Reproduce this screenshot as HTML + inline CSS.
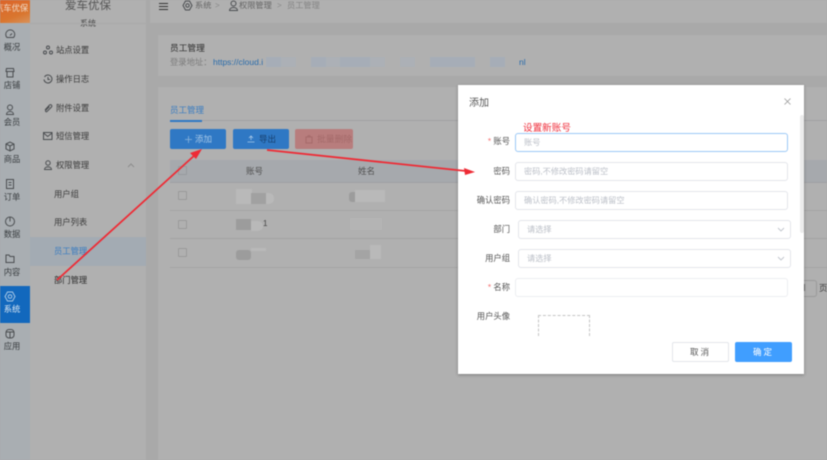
<!DOCTYPE html>
<html lang="zh"><head><meta charset="utf-8"><title>员工管理</title>
<style>
html,body{margin:0;padding:0;width:827px;height:460px;overflow:hidden;background:#a9a9a9}
#p{position:relative;width:827px;height:460px;overflow:hidden;background:#a9a9a9;font-family:"Liberation Sans","Noto Sans CJK SC",sans-serif;filter:blur(.4px)}
.a{position:absolute}
.t{position:absolute;white-space:nowrap;line-height:12px}
.r{text-align:center;width:30px;left:-3px;font-size:8.300px;color:#3a3e41}
.m{font-size:8.300px;color:#3c3c3c}
.ic{position:absolute;fill:none;stroke:#4a4d50;stroke-width:1}
.l{font-size:8.300px;color:#555;text-align:right;right:317px}
.in{position:absolute;box-sizing:border-box;background:#fff;border:1px solid #e3e5ea;border-radius:3px;height:19px;width:273px;left:515px;font-size:8.200px;color:#bcc0c8;padding:0 8px;line-height:17px;white-space:nowrap}
.b{position:absolute;background:#a6adb7}
.w{position:absolute;background:#b9b9b9}
.g{position:absolute;background:#9c9c9c}
</style></head><body><div id="p">
<!-- rail -->
<div class="a" style="left:0;top:0;width:30px;height:460px;background:#a9aeb2"></div>
<div class="a" style="left:0;top:0;width:30px;height:23px;background:linear-gradient(160deg,#dc642a,#d9762f 65%,#d8935c);overflow:hidden">
<div class="t" style="left:-5px;top:2px;font-size:8.300px;color:#f0d9c6">汽车优保</div></div>
<div class="a" style="left:0;top:286px;width:30px;height:37px;background:#1268bd"></div>
<div class="t r" style="top:41px">概况</div>
<div class="t r" style="top:79px">店铺</div>
<div class="t r" style="top:116px">会员</div>
<div class="t r" style="top:153px">商品</div>
<div class="t r" style="top:191px">订单</div>
<div class="t r" style="top:228px">数据</div>
<div class="t r" style="top:266px">内容</div>
<div class="t r" style="top:303px;color:#dfe9f3">系统</div>
<div class="t r" style="top:340px">应用</div>
<svg class="ic" style="left:0;top:28px" width="20" height="12" viewBox="0 0 20 12"><path d="M7 9.500a4.500 4.500 0 1 1 6.500 0z"/><path d="M10 7.500l2-2"/></svg>
<svg class="ic" style="left:0;top:67px" width="20" height="11" viewBox="0 0 20 11"><path d="M6.500 1.500h7l.5 3h-8zM7 5v5h6V5"/></svg>
<svg class="ic" style="left:0;top:104px" width="20" height="11" viewBox="0 0 20 11"><circle cx="10" cy="3.500" r="2.500"/><path d="M6.500 10.500c0-4 7-4 7 0z"/></svg>
<svg class="ic" style="left:0;top:141px" width="20" height="11" viewBox="0 0 20 11"><path d="M6 3l4-2 4 2v5l-4 2-4-2zM6 3l4 2 4-2M10 5v5"/></svg>
<svg class="ic" style="left:0;top:178px" width="20" height="11" viewBox="0 0 20 11"><path d="M6.500 1.500h7v9h-7zM8.500 4.500h3M8.500 7h3"/></svg>
<svg class="ic" style="left:0;top:216px" width="20" height="11" viewBox="0 0 20 11"><circle cx="10" cy="5.500" r="4.500"/><path d="M10 1v4.500"/></svg>
<svg class="ic" style="left:0;top:253px" width="20" height="11" viewBox="0 0 20 11"><path d="M6 2h3l1 1.500h4V9.500H6z"/></svg>
<svg class="ic" style="left:0;top:291px;stroke:#a9c8e6" width="20" height="11" viewBox="0 0 20 11"><path d="M7.500 1h5l2.500 4.500-2.500 4.500h-5L5 5.500z"/><circle cx="10" cy="5.500" r="1.800"/></svg>
<svg class="ic" style="left:0;top:328px" width="20" height="11" viewBox="0 0 20 11"><rect x="6" y="1.500" width="8" height="8.500" rx="3"/><path d="M6 4h8M10 4v6"/></svg>
<!-- second sidebar -->
<div class="a" style="left:30px;top:0;width:116px;height:460px;background:#b0b0b0"></div>
<div class="t" style="left:30px;width:116px;text-align:center;top:0;font-size:11.500px;line-height:12px;color:#555">爱车优保</div>
<div class="t" style="left:30px;width:116px;text-align:center;top:18px;font-size:8px;color:#3f3f3f">系统</div>
<div class="a" style="left:30px;top:23px;width:116px;height:1px;background:#a9a9a9"></div>
<div class="t m" style="left:56px;top:44px">站点设置</div>
<div class="t m" style="left:56px;top:73px">操作日志</div>
<div class="t m" style="left:56px;top:102px">附件设置</div>
<div class="t m" style="left:56px;top:130px">短信管理</div>
<div class="t m" style="left:56px;top:159px">权限管理</div>
<svg class="ic" style="left:43px;top:45px" width="10" height="10" viewBox="0 0 10 10"><circle cx="5" cy="2.500" r="1.500"/><circle cx="2" cy="7.500" r="1.500"/><circle cx="8" cy="7.500" r="1.500"/></svg>
<svg class="ic" style="left:43px;top:74px" width="10" height="10" viewBox="0 0 10 10"><path d="M1.500 3A4 4 0 1 1 1 5.500M5 3v2.500h2"/></svg>
<svg class="ic" style="left:43px;top:103px" width="10" height="10" viewBox="0 0 10 10"><path d="M2 7l4.500-5c1.500-1 3 .5 2 2L4 8.500c-1 .8-2-.2-1.300-1.200L6.500 3.500"/></svg>
<svg class="ic" style="left:43px;top:131px" width="10" height="10" viewBox="0 0 10 10"><rect x=".5" y="1.500" width="8.500" height="7"/><path d="M.5 2l4.200 3.500L9 2"/></svg>
<svg class="ic" style="left:43px;top:160px" width="10" height="10" viewBox="0 0 10 10"><circle cx="5" cy="3" r="2.200"/><path d="M1.500 9.500c0-3.500 7-3.500 7 0z"/></svg>
<svg class="ic" style="left:127px;top:163px;stroke:#8d8d8d" width="8" height="5" viewBox="0 0 8 5"><path d="M1 4l3-3 3 3"/></svg>
<div class="a" style="left:30px;top:237px;width:116px;height:29px;background:#a3abb3"></div>
<div class="t m" style="left:54px;top:188px">用户组</div>
<div class="t m" style="left:54px;top:216px">用户列表</div>
<div class="t m" style="left:54px;top:245px;color:#3a7cc0">员工管理</div>
<div class="t m" style="left:54px;top:274px;color:#2c2c2c">部门管理</div>
<!-- top bar -->
<div class="a" style="left:150px;top:0;width:677px;height:23px;background:#b0b0b0"></div>
<svg class="a" style="left:159px;top:1px" width="10" height="10" viewBox="0 0 10 10" fill="none" stroke="#333" stroke-width="1"><path d="M0 2.500h9M0 5.500h9M0 8.500h9"/></svg>
<svg class="ic" style="left:182px;top:0" width="11" height="11" viewBox="0 0 11 11"><path d="M3.500 1h4L10 5.500 7.500 10h-4L1 5.500z"/><circle cx="5.500" cy="5.500" r="1.700"/></svg>
<div class="t" style="left:195px;top:0;font-size:8.200px;color:#666">系统</div>
<div class="t" style="left:215px;top:0;font-size:8px;color:#888">&gt;</div>
<svg class="ic" style="left:228px;top:0" width="11" height="11" viewBox="0 0 11 11"><circle cx="5.500" cy="3.500" r="2.500"/><path d="M1.500 10.500c0-4 8-4 8 0z"/></svg>
<div class="t" style="left:239px;top:0;font-size:8.200px;color:#666">权限管理</div>
<div class="t" style="left:277px;top:0;font-size:8px;color:#888">&gt;</div>
<div class="t" style="left:287px;top:0;font-size:8.200px;color:#858585">员工管理</div>
<!-- card 1 -->
<div class="a" style="left:158px;top:35px;width:669px;height:41px;background:#b0b0b0"></div>
<div class="t" style="left:170px;top:42px;font-size:8.700px;color:#2e2e2e">员工管理</div>
<div class="t" style="left:170px;top:56px;font-size:8.300px;color:#7d7d7d">登录地址：</div>
<div class="t" style="left:213px;top:56px;font-size:8.500px;color:#2a6cab">https://cloud.i</div>
<div class="b" style="left:266px;top:57px;width:15px;height:10px"></div>
<div class="b" style="left:281px;top:57px;width:15px;height:10px;background:#acb0b6"></div>
<div class="b" style="left:311px;top:57px;width:15px;height:10px"></div>
<div class="b" style="left:326px;top:57px;width:14px;height:10px;background:#acb0b6"></div>
<div class="b" style="left:340px;top:57px;width:30px;height:10px"></div>
<div class="b" style="left:370px;top:57px;width:15px;height:10px;background:#acb0b6"></div>
<div class="b" style="left:400px;top:57px;width:15px;height:10px;background:#acb0b6"></div>
<div class="b" style="left:430px;top:57px;width:45px;height:10px"></div>
<div class="b" style="left:490px;top:57px;width:15px;height:10px"></div>
<div class="t" style="left:519px;top:56px;font-size:8.500px;color:#2a6cab">nl</div>
<!-- card 2 -->
<div class="a" style="left:158px;top:87px;width:669px;height:373px;background:#b0b0b0"></div>
<div class="t" style="left:170px;top:104px;font-size:8.500px;color:#3a7cc0">员工管理</div>
<div class="a" style="left:170px;top:120px;width:657px;height:1px;background:#a0a0a3"></div>
<div class="a" style="left:170px;top:120px;width:32px;height:2px;background:#2f78c4"></div>
<div class="a" style="left:170px;top:129px;width:56px;height:20px;border-radius:2px;background:#2f78c4"></div>
<svg class="a" style="left:185px;top:136px" width="7" height="7" viewBox="0 0 7 7" fill="none" stroke="#8db5dd" stroke-width=".8"><path d="M3.500 0v7M0 3.500h7"/></svg>
<div class="t" style="left:195px;top:133px;font-size:8.500px;color:#a9c9e8">添加</div>
<div class="a" style="left:233px;top:129px;width:56px;height:20px;border-radius:2px;background:#2f78c4"></div>
<svg class="a" style="left:247px;top:135px" width="8" height="8" viewBox="0 0 8 8" fill="none" stroke="#a9c9e8" stroke-width=".8"><path d="M4 1v4M2 3l2-2 2 2M.5 7h7"/></svg>
<div class="t" style="left:259px;top:133px;font-size:8.500px;color:#17406e">导出</div>
<div class="a" style="left:295px;top:129px;width:58px;height:20px;border-radius:2px;background:#b87d7d"></div>
<svg class="a" style="left:305px;top:135px" width="8" height="9" viewBox="0 0 8 9" fill="none" stroke="#a56b6b"><path d="M1 2h6v6H1zM3 2V.7h2V2"/></svg>
<div class="t" style="left:317px;top:133px;font-size:8.800px;color:#a46a6a">批量删除</div>
<!-- table -->
<div class="a" style="left:170px;top:160px;width:657px;height:22px;background:#a6a9ad"></div>
<div class="a" style="left:170px;top:210px;width:657px;height:1px;background:#a4a4a4"></div>
<div class="a" style="left:170px;top:238px;width:657px;height:1px;background:#a2a2a2"></div>
<div class="a" style="left:170px;top:267px;width:657px;height:1px;background:#a4a4a4"></div>
<div class="a" style="left:170px;top:182px;width:657px;height:1px;background:#a0a0a3"></div>
<div class="t" style="left:246px;top:165px;font-size:8.500px;color:#505050">账号</div>
<div class="t" style="left:358px;top:165px;font-size:8.500px;color:#505050">姓名</div>
<div class="a" style="left:178px;top:166px;width:7px;height:7px;border:1px solid #979a9e;border-radius:1px"></div>
<div class="a" style="left:178px;top:191px;width:7px;height:7px;border:1px solid #9a9a9a;border-radius:1px"></div>
<div class="a" style="left:178px;top:220px;width:7px;height:7px;border:1px solid #9a9a9a;border-radius:1px"></div>
<div class="a" style="left:178px;top:248px;width:7px;height:7px;border:1px solid #9a9a9a;border-radius:1px"></div>
<div class="w" style="left:236px;top:189px;width:16px;height:15px"></div>
<div class="g" style="left:251px;top:193px;width:15px;height:11px;background:#a1a1a1"></div>
<div class="w" style="left:266px;top:193px;width:8px;height:11px;border-radius:0 5px 5px 0"></div>
<div class="g" style="left:236px;top:219px;width:15px;height:11px"></div>
<div class="w" style="left:251px;top:221px;width:12px;height:10px;border-radius:0 5px 5px 0"></div>
<div class="t" style="left:263px;top:218px;font-size:8px;color:#444">1</div>
<div class="g" style="left:236px;top:250px;width:15px;height:10px;border-radius:3px"></div>
<div class="w" style="left:251px;top:248px;width:15px;height:3px"></div>
<div class="g" style="left:349px;top:192px;width:6px;height:10px;border-radius:3px 0 0 3px"></div>
<div class="w" style="left:355px;top:190px;width:30px;height:12px"></div>
<div class="w" style="left:350px;top:218px;width:32px;height:12px;background:#b4b4b4"></div>
<div class="g" style="left:355px;top:250px;width:15px;height:9px;background:#a4a4a4"></div>
<div class="w" style="left:370px;top:245px;width:11px;height:14px"></div>
<!-- pagination -->
<div class="a" style="left:790px;top:280px;width:25px;height:15px;border:1px solid #999;border-radius:3px"></div>
<div class="a" style="left:803px;top:284px;width:2px;height:7px;background:#666"></div>
<div class="t" style="left:819px;top:282px;font-size:8.500px;color:#444">页</div>
<!-- modal -->
<div class="a" style="left:458px;top:85px;width:346px;height:289px;background:#fff;box-shadow:0 1px 3px rgba(0,0,0,.3)"></div>
<div class="t" style="left:469px;top:98px;font-size:10px;color:#555">添加</div>
<svg class="a" style="left:784px;top:98px" width="7" height="7" viewBox="0 0 7 7" fill="none" stroke="#999" stroke-width=".8"><path d="M.5.5l6 6M6.500.5l-6 6"/></svg>
<div class="a" style="left:800px;top:115px;width:3.500px;height:118px;background:#ececec;border-radius:2px"></div>
<div class="t" style="left:523px;top:123px;font-size:9.600px;color:#ef2f3c">设置新账号</div>
<div class="t l" style="top:135px"><span style="color:#f56c6c">* </span>账号</div>
<div class="t l" style="top:165px">密码</div>
<div class="t l" style="top:194px">确认密码</div>
<div class="t l" style="top:223px">部门</div>
<div class="t l" style="top:252px">用户组</div>
<div class="t l" style="top:281px"><span style="color:#f56c6c">* </span>名称</div>
<div class="t l" style="top:310px">用户头像</div>
<div class="in" style="top:133px;border-color:#9cc9f6">账号</div>
<div class="in" style="top:162px">密码,不修改密码请留空</div>
<div class="in" style="top:191px">确认密码,不修改密码请留空</div>
<div class="in" style="top:220px;left:518px">请选择</div>
<div class="in" style="top:249px;left:518px">请选择</div>
<div class="in" style="top:278px;border-color:#eceef1"></div>
<svg class="a" style="left:777px;top:227px" width="8" height="5" viewBox="0 0 8 5" fill="none" stroke="#c0c4cc" stroke-width=".9"><path d="M1 1l3 3 3-3"/></svg>
<svg class="a" style="left:777px;top:256px" width="8" height="5" viewBox="0 0 8 5" fill="none" stroke="#c0c4cc" stroke-width=".9"><path d="M1 1l3 3 3-3"/></svg>
<div class="a" style="left:538px;top:315px;width:52px;height:21px;border:1px dashed #c4c4c4;border-bottom:0;box-sizing:border-box"></div>
<div class="a" style="left:672px;top:342px;width:57px;height:20px;box-sizing:border-box;border:1px solid #e3e5ea;border-radius:2px;background:#fff;text-align:center;font-size:8.500px;line-height:18px;color:#555;letter-spacing:2px">取消</div>
<div class="a" style="left:735px;top:342px;width:57px;height:20px;border-radius:2px;background:#409eff;text-align:center;font-size:8.500px;line-height:20px;color:#fff;letter-spacing:2px">确定</div>
<!-- arrows -->
<svg class="a" style="left:0;top:0" width="827" height="460" fill="none">
<path d="M57 280L196 154" stroke="#ee2b35" stroke-width="1.800"/>
<path d="M202 149L190 153L196 159z" fill="#ee2b35"/>
<path d="M267 150L466 171" stroke="#ee2b35" stroke-width="1.800"/>
<path d="M475 172L464 168L465 175z" fill="#ee2b35"/>
</svg>
</div></body></html>
